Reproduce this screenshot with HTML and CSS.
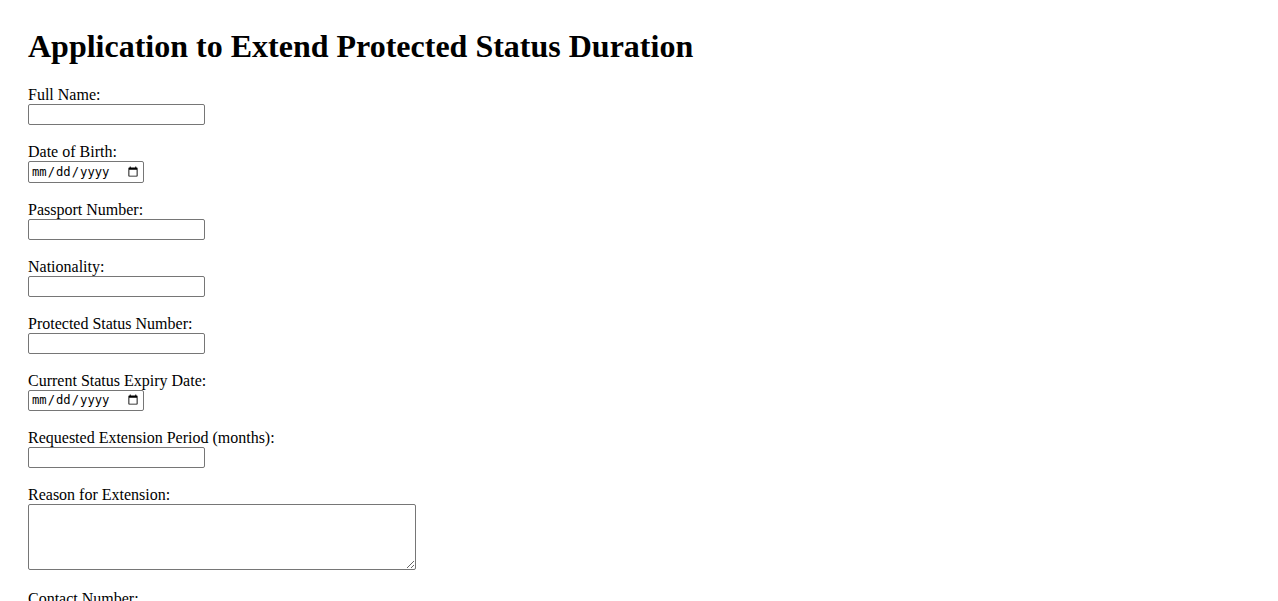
FILE: index.html
```html
<!DOCTYPE html>
<html lang="en">
<head>
<meta charset="utf-8">
<title>Application to Extend Protected Status Duration</title>
<link rel="stylesheet" href="styles.css">
</head>
<body>
<div class="page">
  <h1 class="title">Application to Extend Protected Status Duration</h1>
  <form class="form">
    <div class="field">
      <label class="label" for="name">Full Name:</label>
      <input class="text-input" type="text" id="name">
    </div>
    <div class="field">
      <label class="label" for="dob">Date of Birth:</label>
      <input class="date-input" type="date" id="dob">
    </div>
    <div class="field">
      <label class="label" for="passport">Passport Number:</label>
      <input class="text-input" type="text" id="passport">
    </div>
    <div class="field">
      <label class="label" for="nationality">Nationality:</label>
      <input class="text-input" type="text" id="nationality">
    </div>
    <div class="field">
      <label class="label" for="psn">Protected Status Number:</label>
      <input class="text-input" type="text" id="psn">
    </div>
    <div class="field">
      <label class="label" for="expiry">Current Status Expiry Date:</label>
      <input class="date-input" type="date" id="expiry">
    </div>
    <div class="field">
      <label class="label" for="period">Requested Extension Period (months):</label>
      <input class="text-input" type="number" id="period">
    </div>
    <div class="field field-wide">
      <label class="label" for="reason">Reason for Extension:</label>
      <textarea class="textarea" id="reason"></textarea>
    </div>
    <div class="field">
      <label class="label" for="phone">Contact Number:</label>
      <input class="text-input" type="tel" id="phone">
    </div>
    <div class="field">
      <label class="label" for="email">Email Address:</label>
      <input class="text-input" type="email" id="email">
    </div>
    <div class="field">
      <button class="submit" type="submit">Submit Application</button>
    </div>
  </form>
</div>
</body>
</html>
```

FILE: styles.css
```css
html, body {
  margin: 0;
  padding: 0;
  background: #ffffff;
}

.page {
  padding: 28px;
  font-family: "Liberation Serif", "Times New Roman", serif;
  font-size: 16px;
  color: #000000;
}

.title {
  margin: 0 0 21px 0;
  font-size: 32px;
  font-weight: bold;
  line-height: 37px;
}

.form {
  display: flex;
  flex-direction: column;
  align-items: flex-start;
}

.field {
  display: flex;
  flex-direction: column;
  align-items: flex-start;
  margin-bottom: 18px;
}

.field-wide {
  margin-bottom: 20px;
}

.label {
  line-height: 18px;
  height: 18px;
}

.text-input {
  box-sizing: border-box;
  width: 177px;
  height: 21px;
  margin: 0;
  padding: 1px 2px;
  border: 1px solid #767676;
  border-radius: 2px;
  font-family: "Liberation Sans", Arial, sans-serif;
  font-size: 13px;
}

.text-input[type="number"] {
  -moz-appearance: textfield;
}

.date-input {
  box-sizing: border-box;
  width: 116px;
  height: 21.5px;
  margin: 0;
  padding: 1px 2px;
  border: 1px solid #767676;
  border-radius: 2px;
  font-family: "DejaVu Sans Mono", monospace;
  font-size: 12.2px;
}

.textarea {
  box-sizing: border-box;
  width: 388px;
  height: 66px;
  margin: 0;
  padding: 2px;
  border: 1px solid #767676;
  border-radius: 2px;
  font-family: "Liberation Mono", monospace;
  font-size: 13px;
}

.submit {
  font-family: "Liberation Sans", Arial, sans-serif;
  font-size: 13px;
}
```
